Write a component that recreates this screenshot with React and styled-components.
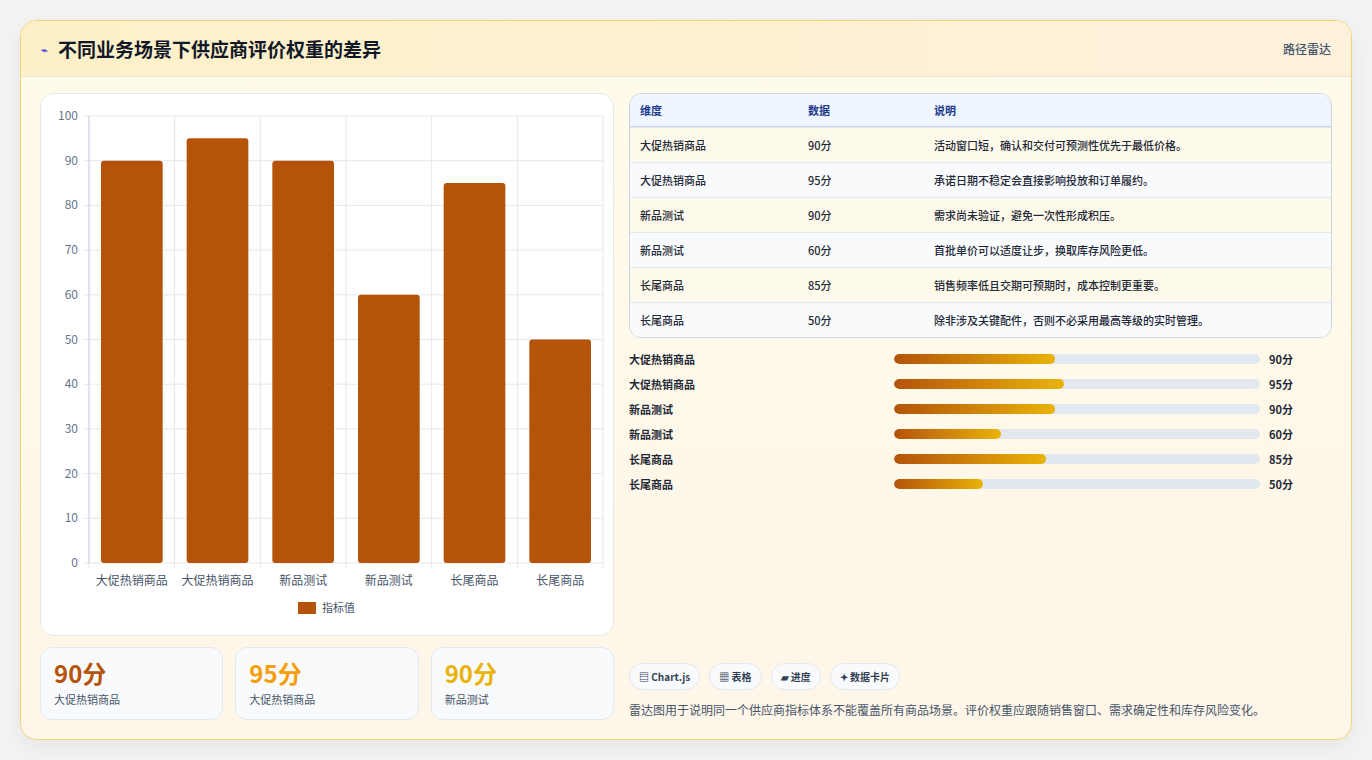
import React from "react";
import styled, { createGlobalStyle } from "styled-components";

const G = createGlobalStyle`
  body{margin:0;background:#f3f3f3;font-family:"Noto Sans CJK SC","Noto Sans",sans-serif;}
`;
const Page = styled.div`padding:20px;`;
const Card = styled.div`
  height:720px;box-sizing:border-box;border:1px solid #f2d27a;border-radius:16px;
  background:linear-gradient(180deg,#fffbeb,#fef6e8);overflow:hidden;display:flex;flex-direction:column;
  box-shadow:0 8px 24px rgba(0,0,0,.06);
`;
const Header = styled.div`
  height:55px;flex:none;display:flex;align-items:center;justify-content:space-between;padding:0 20px;
  background:linear-gradient(90deg,#fdf0c8,#fdf1dc);border-bottom:1px solid #efe4cf;
`;
const Title = styled.h1`margin:0;font-size:19px;font-weight:700;color:#111827;display:flex;align-items:center;gap:10px;`;
const Tag = styled.span`font-size:12px;color:#475569;font-weight:500;`;
const Body = styled.div`flex:1;display:grid;grid-template-columns:574px 703px;gap:15px;padding:16px 19px 20px 19px;`;
const Col = styled.div`display:flex;flex-direction:column;gap:11px;min-height:0;`;
const ChartBox = styled.div`height:543px;box-sizing:border-box;background:#fff;border:1px solid #e5e7eb;border-radius:14px;`;
const Stats = styled.div`display:grid;grid-template-columns:repeat(3,1fr);gap:12px;`;
const Stat = styled.div`height:73px;box-sizing:border-box;background:#f8fafc;border:1px solid #e2e8f0;border-radius:12px;padding:9px 13px;`;
const StatV = styled.div`font-size:24px;font-weight:700;color:${p=>p.c};line-height:32px;`;
const StatL = styled.div`font-size:11px;color:#475569;margin-top:2px;`;
const Table = styled.div`border:1px solid #cbd5e1;border-radius:12px;overflow:hidden;`;
const Row = styled.div`
  display:grid;grid-template-columns:168px 126px 1fr;height:${p=>p.h?32:34}px;align-items:center;padding:0 10px;
  font-size:11px;font-weight:${p=>p.h?600:500};color:${p=>p.h?"#1e3a8a":"#1f2937"};
  background:${p=>p.h?"#eff6ff":p.alt?"#f8fafc":"#fefaeb"};
  border-top:${p=>p.first?"none":p.h?"none":"1px solid #e2e8f0"};
  ${p=>p.h&&"border-bottom:1px solid #cbd5e1;"}
`;
const Bars = styled.div`display:flex;flex-direction:column;gap:11px;margin-top:2px;`;
const BarRow = styled.div`display:grid;grid-template-columns:265px 366px 1fr;align-items:center;font-size:11px;font-weight:600;color:#1f2937;height:14px;`;
const Track = styled.div`height:10px;background:#e2e8f0;border-radius:5px;overflow:hidden;`;
const Fill = styled.div`height:100%;border-radius:5px;background:linear-gradient(90deg,#b45309,#eab308);`;
const Val = styled.span`padding-left:9px;`;
const Spacer = styled.div`flex:1;`;
const Chips = styled.div`display:flex;gap:9px;`;
const Chip = styled.span`height:27px;box-sizing:border-box;padding:0 9px;display:flex;align-items:center;gap:4px;border:1px solid #e2e8f0;border-radius:14px;background:#f8fafc;font-size:10px;font-weight:600;color:#334155;`;
const Note = styled.p`margin:10px 0 0;font-size:12px;color:#475569;line-height:20px;`;

const data=[["大促热销商品",90,"活动窗口短，确认和交付可预测性优先于最低价格。"],["大促热销商品",95,"承诺日期不稳定会直接影响投放和订单履约。"],["新品测试",90,"需求尚未验证，避免一次性形成积压。"],["新品测试",60,"首批单价可以适度让步，换取库存风险更低。"],["长尾商品",85,"销售频率低且交期可预期时，成本控制更重要。"],["长尾商品",50,"除非涉及关键配件，否则不必采用最高等级的实时管理。"]];

function Chart(){
  const x0=48,x1=562,y0=22,y1=469,cw=(x1-x0)/6;
  const yy=v=>y1-(v/100)*(y1-y0);
  return (
    <svg width="574" height="543" viewBox="0 0 574 543" fontFamily="Noto Sans CJK SC, sans-serif">
      {[0,10,20,30,40,50,60,70,80,90,100].map(v=>(
        <g key={v}><line x1={x0-5} x2={x1} y1={yy(v)} y2={yy(v)} stroke="#e5e7eb"/>
        <text x={x0-11} y={yy(v)+4} fontSize="12" fill="#64748b" textAnchor="end">{v}</text></g>))}
      {[0,1,2,3,4,5,6].map(i=><line key={i} x1={x0+i*cw} x2={x0+i*cw} y1={y0} y2={y1+5} stroke="#e5e7eb"/>)}
      <line x1={x0} x2={x0} y1={y0} y2={y1} stroke="#cbd5e1"/>
      {data.map((d,i)=>(
        <g key={i}><rect x={x0+i*cw+12} y={yy(d[1])} width={cw-24} height={y1-yy(d[1])} rx="3" fill="#b45309"/>
        <text x={x0+i*cw+cw/2} y={y1+22} fontSize="12" fill="#475569" textAnchor="middle">{d[0]}</text></g>))}
      <rect x="257" y="508" width="18" height="12" fill="#b45309"/>
      <text x="281" y="518" fontSize="11" fill="#475569">指标值</text>
    </svg>);
}

export default function App(){
  return (<Page><G/><Card>
    <Header><Title><span style={{color:"#4f46e5",fontSize:11}}>⌁</span>不同业务场景下供应商评价权重的差异</Title><Tag>路径雷达</Tag></Header>
    <Body>
      <Col>
        <ChartBox><Chart/></ChartBox>
        <Stats>
          <Stat><StatV c="#b45309">90分</StatV><StatL>大促热销商品</StatL></Stat>
          <Stat><StatV c="#f59e0b">95分</StatV><StatL>大促热销商品</StatL></Stat>
          <Stat><StatV c="#eab308">90分</StatV><StatL>新品测试</StatL></Stat>
        </Stats>
      </Col>
      <Col>
        <Table>
          <Row h first><span>维度</span><span>数据</span><span>说明</span></Row>
          {data.map((d,i)=><Row key={i} alt={i%2===1}><span>{d[0]}</span><span>{d[1]}分</span><span>{d[2]}</span></Row>)}
        </Table>
        <Bars>
          {data.map((d,i)=><BarRow key={i}><span>{d[0]}</span><Track><Fill style={{width:`${d[1]*0.489}%`}}/></Track><Val>{d[1]}分</Val></BarRow>)}
        </Bars>
        <Spacer/>
        <div>
          <Chips><Chip>▤ Chart.js</Chip><Chip>▦ 表格</Chip><Chip>▰ 进度</Chip><Chip>✦ 数据卡片</Chip></Chips>
          <Note>雷达图用于说明同一个供应商指标体系不能覆盖所有商品场景。评价权重应跟随销售窗口、需求确定性和库存风险变化。</Note>
        </div>
      </Col>
    </Body>
  </Card></Page>);
}
